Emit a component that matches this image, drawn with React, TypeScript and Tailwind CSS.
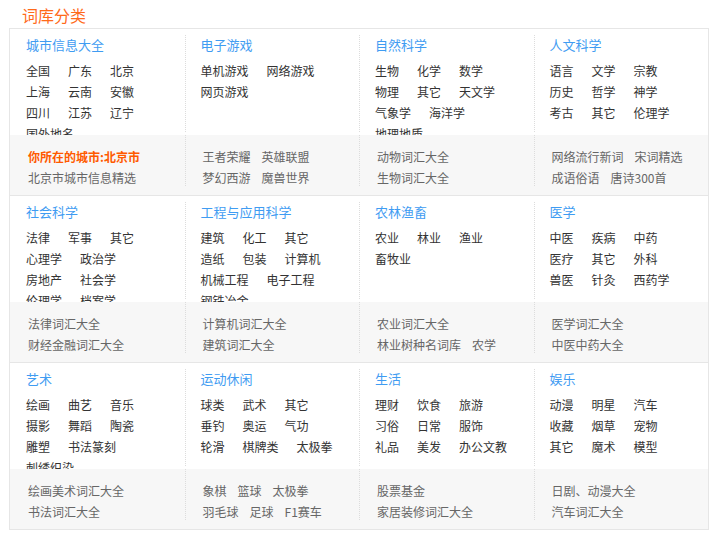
type LinkItem = string | { t: string; hot: boolean };

interface Category {
  title: string;
  items: string[];
  links: LinkItem[][];
}

const sections: Category[][] = [
  [
    {
      title: '城市信息大全',
      items: ['全国', '广东', '北京', '上海', '云南', '安徽', '四川', '江苏', '辽宁', '国外地名'],
      links: [[{ t: '你所在的城市:北京市', hot: true }], ['北京市城市信息精选']],
    },
    {
      title: '电子游戏',
      items: ['单机游戏', '网络游戏', '网页游戏'],
      links: [['王者荣耀', '英雄联盟'], ['梦幻西游', '魔兽世界']],
    },
    {
      title: '自然科学',
      items: ['生物', '化学', '数学', '物理', '其它', '天文学', '气象学', '海洋学', '地理地质'],
      links: [['动物词汇大全'], ['生物词汇大全']],
    },
    {
      title: '人文科学',
      items: ['语言', '文学', '宗教', '历史', '哲学', '神学', '考古', '其它', '伦理学'],
      links: [['网络流行新词', '宋词精选'], ['成语俗语', '唐诗300首']],
    },
  ],
  [
    {
      title: '社会科学',
      items: ['法律', '军事', '其它', '心理学', '政治学', '房地产', '社会学', '伦理学', '档案学'],
      links: [['法律词汇大全'], ['财经金融词汇大全']],
    },
    {
      title: '工程与应用科学',
      items: ['建筑', '化工', '其它', '造纸', '包装', '计算机', '机械工程', '电子工程', '钢铁冶金'],
      links: [['计算机词汇大全'], ['建筑词汇大全']],
    },
    {
      title: '农林渔畜',
      items: ['农业', '林业', '渔业', '畜牧业'],
      links: [['农业词汇大全'], ['林业树种名词库', '农学']],
    },
    {
      title: '医学',
      items: ['中医', '疾病', '中药', '医疗', '其它', '外科', '兽医', '针灸', '西药学'],
      links: [['医学词汇大全'], ['中医中药大全']],
    },
  ],
  [
    {
      title: '艺术',
      items: ['绘画', '曲艺', '音乐', '摄影', '舞蹈', '陶瓷', '雕塑', '书法篆刻', '刺绣织染'],
      links: [['绘画美术词汇大全'], ['书法词汇大全']],
    },
    {
      title: '运动休闲',
      items: ['球类', '武术', '其它', '垂钓', '奥运', '气功', '轮滑', '棋牌类', '太极拳'],
      links: [['象棋', '篮球', '太极拳'], ['羽毛球', '足球', 'F1赛车']],
    },
    {
      title: '生活',
      items: ['理财', '饮食', '旅游', '习俗', '日常', '服饰', '礼品', '美发', '办公文教'],
      links: [['股票基金'], ['家居装修词汇大全']],
    },
    {
      title: '娱乐',
      items: ['动漫', '明星', '汽车', '收藏', '烟草', '宠物', '其它', '魔术', '模型'],
      links: [['日剧、动漫大全'], ['汽车词汇大全']],
    },
  ],
];

function CategoryColumn({ cat, first }: { cat: Category; first: boolean }) {
  const divider = first ? 'border-transparent' : 'border-[#dcdcdc]';
  return (
    <div className="flex flex-col">
      <div className="h-[106px] overflow-hidden bg-white pt-[9px]">
        <div className={`h-full border-l border-dotted pl-[15px] ${divider}`}>
          <div className="-mt-[3px] text-[13px] leading-[20px] text-[#3f9cf2]">{cat.title}</div>
          <div className="mt-[5px] flex flex-wrap">
            {cat.items.map((item, i) => (
              <span key={i} className="mr-[18px] text-[12px] leading-[21px] text-[#333]">
                {item}
              </span>
            ))}
          </div>
        </div>
      </div>
      <div className="h-[60px] bg-[#f7f7f7] pb-[9px]">
        <div className={`h-full border-l border-dotted pl-[17px] pt-[11px] ${divider}`}>
          {cat.links.map((line, li) => (
            <div key={li} className="flex whitespace-nowrap text-[12px] leading-[21px]">
              {line.map((link, i) =>
                typeof link === 'string' ? (
                  <span key={i} className="mr-[11px] text-[#666]">
                    {link}
                  </span>
                ) : (
                  <span key={i} className="mr-[11px] font-bold text-[#ff5a00]">
                    {link.t}
                  </span>
                ),
              )}
            </div>
          ))}
        </div>
      </div>
    </div>
  );
}

export default function App() {
  return (
    <div
      className="h-[543px] w-[724px] bg-white"
      style={{ fontFamily: '"Microsoft YaHei", "Noto Sans CJK SC", "Noto Sans", sans-serif' }}
    >
      <div className="h-[28px] pl-[22px] pt-[4px] text-[16px] leading-[22px] text-[#ff6a1a]">词库分类</div>
      <div className="ml-[9px] w-[700px] border border-[#e6e6e6]">
        {sections.map((row, si) => (
          <div key={si} className={`grid grid-cols-4 ${si > 0 ? 'border-t border-[#e6e6e6]' : ''}`}>
            {row.map((cat, ci) => (
              <CategoryColumn key={ci} cat={cat} first={ci === 0} />
            ))}
          </div>
        ))}
      </div>
    </div>
  );
}
